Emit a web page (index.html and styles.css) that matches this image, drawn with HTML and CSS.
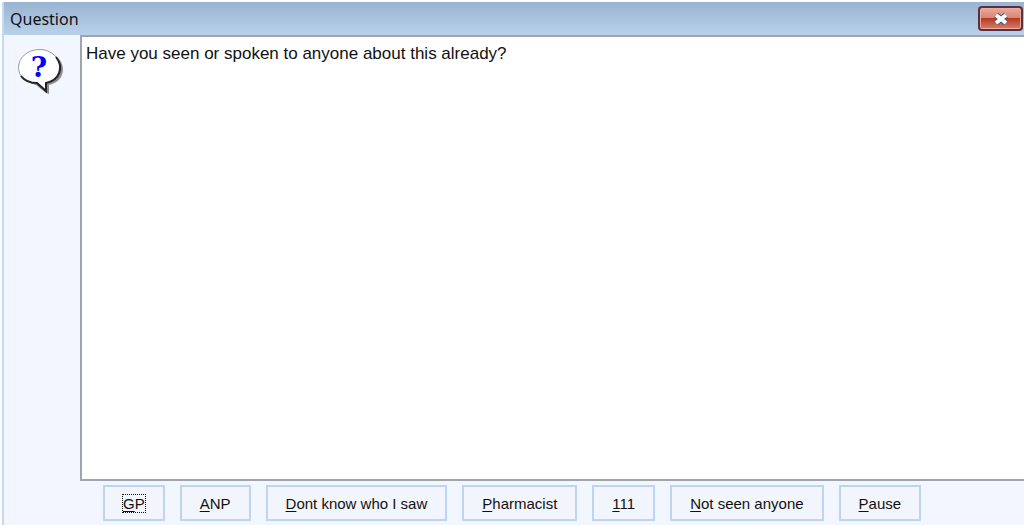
FILE: index.html
```
<!DOCTYPE html>
<html lang="en">
  <head>
    <meta charset="UTF-8" />
    <title>Question</title>
    <link rel="stylesheet" href="styles.css">
  </head>
  <body>
    <main class="dialog">
      <header class="titlebar">
        <h1 class="title">Question</h1>
        <button type="button" class="close" aria-label="Close">
          <svg width="18" height="14" viewBox="0 0 18 14">
            <path class="x-edge" d="M4 3L14 11M14 3L4 11" />
            <path class="x-fill" d="M4 3L14 11M14 3L4 11" />
          </svg>
        </button>
      </header>
      <div class="content">
        <svg class="icon" width="46" height="46" viewBox="0 0 46 46">
          <path fill="#8c8c8c" d="M24 3C36 3 45 11 45 20C45 28 40 34 31 36L31 45L28 44L18 36C8 34 3 28 3 21C3 11 12 3 24 3Z" />
          <path fill="#fff" stroke="#999" d="M22 .5C33 .5 42 9 42 18.500C42 27 36 32 28 34L28 42L19 34C7 34 .5 27 .5 18.500C.5 9 9 .5 22 .5Z" />
          <path fill="none" stroke="#222" stroke-width="2" d="M38 8C46 18 42 31 28 34L28 42L19 34C12 34 6 31 3 27" />
          <text class="mark" x="21" y="28" text-anchor="middle">?</text>
        </svg>
        <p class="message">Have you seen or spoken to anyone about this already?</p>
      </div>
      <div class="answers">
        <button type="button" class="answer" accesskey="g"><span class="focused"><u>G</u>P</span></button>
        <button type="button" class="answer" accesskey="a"><u>A</u>NP</button>
        <button type="button" class="answer" accesskey="d"><u>D</u>ont know who I saw</button>
        <button type="button" class="answer" accesskey="p"><u>P</u>harmacist</button>
        <button type="button" class="answer" accesskey="1"><u>1</u>11</button>
        <button type="button" class="answer" accesskey="n"><u>N</u>ot seen anyone</button>
        <button type="button" class="answer" accesskey="p"><u>P</u>ause</button>
      </div>
    </main>
  </body>
</html>
```
FILE: styles.css
```
* {
  box-sizing: border-box;
}
body {
  margin: 0;
  padding: 2px 0 0 2px;
  background: #fff;
  color: #111;
  font-family: "Liberation Sans", Arial, sans-serif;
}
.dialog {
  display: flex;
  flex-direction: column;
  min-height: calc(100vh - 2px);
  border-left: 2px solid #c5daf2;
  background: #f2f6fe;
}
.titlebar {
  display: flex;
  justify-content: space-between;
  align-items: center;
  height: 33px;
  padding: 0 1px 0 6px;
  background: linear-gradient(#99b4d1, #b9d1ea);
}
.title {
  margin: 0;
  font-family: "Noto Sans", sans-serif;
  font-size: 16px;
  font-weight: normal;
}
.close {
  display: flex;
  justify-content: center;
  align-items: center;
  width: 45px;
  height: 25px;
  padding: 0;
  border: 2px solid #59303f;
  border-radius: 4px;
  background: linear-gradient(#e9a99d, #d98374 48%, #b93a22 50%, #d5806a);
  box-shadow: inset 0 0 0 1px #e8aca0;
}
.close path {
  fill: none;
}
.x-edge {
  stroke: #535666;
  stroke-width: 6;
}
.x-fill {
  stroke: #fff;
  stroke-width: 4;
}
.content {
  display: flex;
  flex: 1;
}
.icon {
  flex: none;
  margin: 14px 16px 0 14px;
}
.mark {
  fill: #00f;
  font-family: "DejaVu Serif", serif;
  font-size: 28px;
  font-weight: bold;
}
.message {
  flex: 1;
  margin: 0;
  padding: 7px 4px;
  border: 2px solid #a0a4ae;
  border-right: 0;
  background: #fff;
  font-size: 17px;
  line-height: 20px;
}
.answers {
  display: flex;
  flex-wrap: wrap;
  gap: 15px;
  padding: 4px 16px 4px 99px;
}
.answer {
  height: 36px;
  padding: 0 18px;
  border: 2px solid #bfd3f3;
  background: #f2f5fc;
  color: #111;
  font-family: inherit;
  font-size: 15px;
}
.answer u {
  text-underline-offset: 2px;
}
.focused {
  outline: 1px dotted #111;
}
```
